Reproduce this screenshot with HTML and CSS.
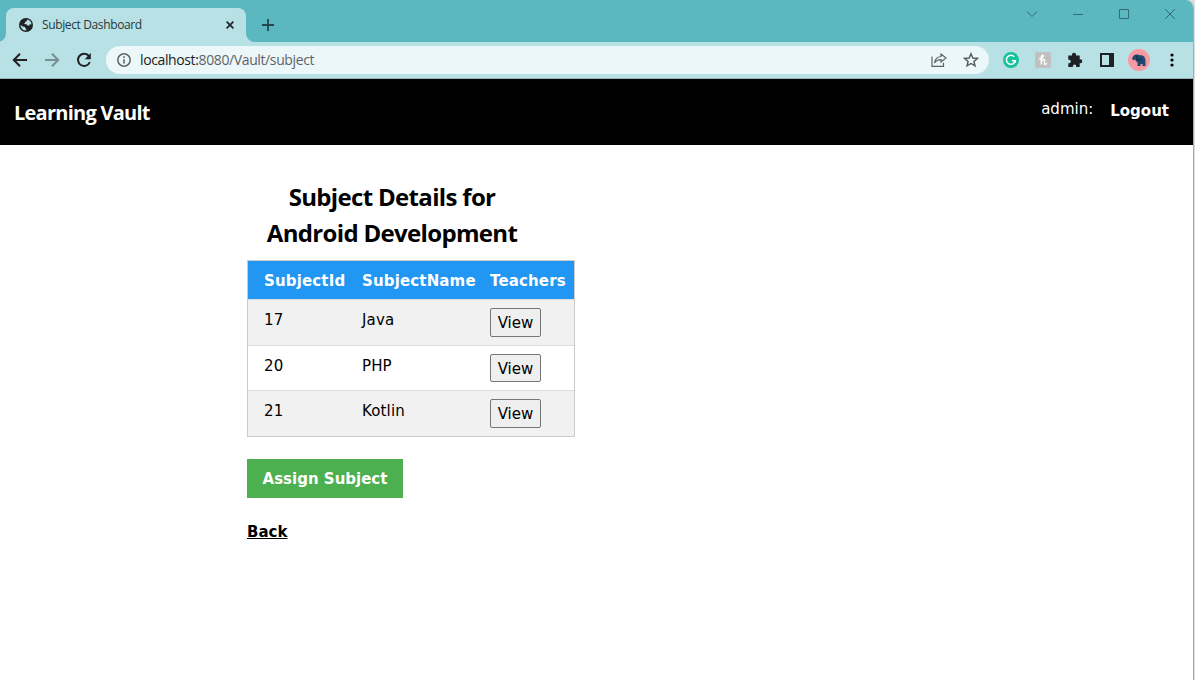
FILE: index.html
```html
<!DOCTYPE html>
<html lang="en">
<head>
<meta charset="utf-8">
<title>Subject Dashboard</title>
<link rel="stylesheet" href="styles.css">
</head>
<body>
<div class="window">
  <header class="tabstrip">
    <div class="tab">
      <svg class="globe" width="14" height="14" viewBox="0 0 14 14"><circle cx="7" cy="7" r="7" fill="#202124"/><path d="M7.800 1.500C8.400 2.600 7.500 3.600 6.300 3.800L5.800 5.200 4.600 6l2.900.3 1 1.200h2V6.300l2 .2A5.500 5.500 0 0 0 7.800 1.500ZM1.500 6.800l2.200 1.700 2.300.4.200 1.300 1 .6v1.700A5.500 5.500 0 0 1 1.500 6.800Z" fill="#b8e1e5"/></svg>
      <span class="tab-title">Subject Dashboard</span>
      <svg class="tab-close" width="8" height="8" viewBox="0 0 8 8"><path d="m.6.6 6.8 6.8M7.4.6.6 7.4" stroke="#202124" stroke-width="1.6"/></svg>
    </div>
    <svg class="new-tab" width="12" height="12" viewBox="0 0 12 12"><path d="M6 0v12M0 6h12" stroke="#26474b" stroke-width="1.8"/></svg>
    <div class="controls">
      <svg width="12" height="12" viewBox="0 0 12 12"><path d="m1 3.5 5 5 5-5"/></svg>
      <svg width="12" height="12" viewBox="0 0 12 12"><path d="M1 6.5h10"/></svg>
      <svg width="12" height="12" viewBox="0 0 12 12"><path d="M1.5 1.5h9v9h-9z"/></svg>
      <svg width="12" height="12" viewBox="0 0 12 12"><path d="m1 1 10 10M11 1 1 11"/></svg>
    </div>
  </header>
  <div class="toolbar">
    <svg class="nav-icon" width="16" height="16" viewBox="0 0 16 16"><path d="M15 8H2M8 1.700 1.800 8 8 14.300"/></svg>
    <svg class="nav-icon muted" width="16" height="16" viewBox="0 0 16 16"><path d="M1 8h13M8 1.700 14.200 8 8 14.300"/></svg>
    <svg class="nav-icon" width="16" height="16" viewBox="0 0 16 16"><path d="M13 4.200A6.100 6.100 0 1 0 13.800 10"/><path class="solid" d="M14.800 1v6.200H8.700z"/></svg>
    <div class="address">
      <svg width="14" height="14" viewBox="0 0 14 14"><circle cx="7" cy="7" r="6.200" fill="none" stroke="#5f6368" stroke-width="1.500"/><path d="M7 6.200v4.300M7 3.300v1.600" stroke="#5f6368" stroke-width="1.600"/></svg>
      <span class="url"><b>localhost:</b>8080/Vault/subject</span>
      <svg class="share" width="16" height="14" viewBox="0 0 16 14"><path d="M1 3.500v9.800h11.500V9.800M10 1l5 4-5 4V6.700C6.800 6.700 5 7.600 3.500 10 4 6.300 6.200 3.900 10 3.500Z" fill="none" stroke="#5f6368" stroke-width="1.200"/></svg>
      <svg class="star" width="16" height="16" viewBox="0 0 16 16"><path d="m8 1.800 1.800 4.200 4.600.400-3.500 3 1.100 4.500L8 11.500l-4 2.400 1.100-4.500-3.500-3 4.600-.400Z" fill="none" stroke="#55595d" stroke-width="1.400"/></svg>
    </div>
    <div class="extensions">
      <svg width="16" height="16" viewBox="0 0 16 16"><circle cx="8" cy="8" r="8" fill="#15c39a"/><path d="M11.200 4.800A4.500 4.500 0 1 0 12.300 8.700H9M12.300 8.700v2.300" fill="none" stroke="#fff" stroke-width="1.500"/></svg>
      <svg width="16" height="16" viewBox="0 0 16 16"><rect width="16" height="16" rx="2" fill="#c0c0c0"/><path d="M4.200 6.800C6.800 6.500 8.700 4.800 8.200 3.500 7.500 2.600 6.300 4 6.300 5v7.500M6.300 10C7.300 7 10 6.400 9.700 8.500c-.3 1.700-.8 4 .5 3.900.8 0 1.300-.7 1.600-1.400" fill="none" stroke="#fff" stroke-width="1.400"/></svg>
      <svg width="16" height="16" viewBox="0 0 16 16"><path d="M1.300 3.500H5V2.800a2 2 0 0 1 4 0v.7h3.700v3.700h.6a2 2 0 0 1 0 4h-.6V15H9.200v-.8a1.600 1.600 0 0 0-3.300 0v.8H1.300v-3.800h.8a1.700 1.700 0 0 0 0-3.400h-.8Z" fill="#202124"/></svg>
      <svg width="16" height="16" viewBox="0 0 16 16"><path d="M1 1h14v14H1ZM3 3v10h7V3Z" fill="#202124" fill-rule="evenodd"/></svg>
      <svg width="22" height="22" viewBox="0 0 22 22"><circle cx="11" cy="11" r="11" fill="#f99aa3"/><path d="M4 9.500C5 8 5.500 6 8 5.600c1.500-.5 3 0 4 .6 3-.3 5.500 1.500 5.500 5V17h-3v-2h-2v2H9.500v-4C8 13 7.500 12 7.300 10.500L5 11.300Z" fill="#21486f"/><path d="M9 7c-1 3 1 4.500 3 4l1-2" fill="none" stroke="#112c4b" stroke-width="1.200"/></svg>
      <svg class="dots" width="4" height="16" viewBox="0 0 4 16"><circle cx="2" cy="3" r="1.600"/><circle cx="2" cy="8" r="1.600"/><circle cx="2" cy="13" r="1.600"/></svg>
    </div>
  </div>
  <nav class="site-nav">
    <span class="brand">Learning Vault</span>
    <span class="user">admin:</span>
    <span class="logout">Logout</span>
  </nav>
  <main class="content">
    <h1 class="heading">Subject Details for<br>Android Development</h1>
    <table class="subjects">
      <thead><tr><th>SubjectId</th><th>SubjectName</th><th>Teachers</th></tr></thead>
      <tbody>
        <tr><td>17</td><td>Java</td><td><button class="view">View</button></td></tr>
        <tr><td>20</td><td>PHP</td><td><button class="view">View</button></td></tr>
        <tr><td>21</td><td>Kotlin</td><td><button class="view">View</button></td></tr>
      </tbody>
    </table>
    <button class="assign">Assign Subject</button>
    <a class="back">Back</a>
  </main>
</div>
</body>
</html>
```
FILE: styles.css
```css
* { box-sizing: border-box; }
body { margin: 0; width: 1195px; height: 680px; overflow: hidden; background: #dedede; font: 15px/22.5px Verdana, "DejaVu Sans", sans-serif; color: #000; }
svg { display: block; flex: none; }
.window { width: 1194px; height: 680px; background: #fff; border-right: 1px solid #aaa; border-top-right-radius: 8px; overflow: hidden; }
.tabstrip { height: 42px; background: #5bb8c1; display: flex; padding: 8px 0 0 6px; }
.tab { position: relative; width: 240px; height: 34px; border-radius: 8px 8px 0 0; background: #b8e1e5; display: flex; align-items: center; padding: 0 12px 0 13px; }
.tab::before, .tab::after { content: ""; position: absolute; bottom: 0; width: 8px; height: 8px; }
.tab::before { left: -8px; background: radial-gradient(circle at 0 0, transparent 7.5px, #b8e1e5 8px); }
.tab::after { right: -8px; background: radial-gradient(circle at 100% 0, transparent 7.5px, #b8e1e5 8px); }
.tab-title { margin-left: 9px; font: 12px/16px "Open Sans", sans-serif; letter-spacing: -0.37px; color: #26373b; white-space: nowrap; }
.tab-close { margin-left: auto; }
.new-tab { margin: 11px 0 0 16px; }
.controls { margin-left: auto; display: flex; gap: 34px; padding-right: 17px; }
.controls svg { fill: none; stroke: #356a70; stroke-width: 1; }
.toolbar { height: 37px; background: #b8e1e5; border-bottom: 1px solid #91b5b8; display: flex; align-items: center; padding-left: 12px; }
.nav-icon { margin-right: 16px; fill: none; stroke: #202124; stroke-width: 2; }
.nav-icon .solid { fill: #202124; stroke: none; }
.nav-icon.muted { stroke: #788f92; }
.address { width: 883px; height: 28px; margin-left: -2px; border-radius: 14px; background: #ebf7f8; display: flex; align-items: center; padding: 0 10px 0 11px; }
.url { margin-left: 9px; font: 14px/20px "Open Sans", sans-serif; letter-spacing: -0.38px; color: #5f6368; }
.url b { font-weight: 400; color: #202124; }
.share { margin-left: auto; }
.star { margin-left: 16px; }
.extensions { margin-left: 14px; display: flex; align-items: center; gap: 16px; }
.extensions svg:nth-child(5) { margin: 0 -3px; }
.extensions .dots { margin-left: 7px; }
.site-nav { height: 66px; background: #000; color: #fff; display: flex; align-items: flex-start; padding: 0 24px 0 14px; }
.brand { font: 700 20px/30px "Open Sans", sans-serif; margin-top: 19px; letter-spacing: -0.75px; }
.user { margin: 19px 17px 0 auto; }
.logout { margin-top: 21px; font-weight: 700; }
.content { width: 328px; margin-left: 247px; padding-top: 34px; }
.heading { width: 290px; margin: 0; height: 81px; font: 700 24px/36px "Open Sans", sans-serif; letter-spacing: -0.67px; text-align: center; white-space: nowrap; }
.subjects { width: 328px; border-collapse: separate; border-spacing: 0; border: 1px solid #ccc; border-bottom: 0; table-layout: fixed; }
.subjects th, .subjects td { text-align: left; vertical-align: top; padding: 9px 0 8px 8px; border-bottom: 1px solid #ddd; white-space: nowrap; letter-spacing: 0.15px; }
.subjects th { height: 39px; padding-bottom: 5px; }
.subjects td:last-child { padding-top: 8px; }
.subjects th:first-child, .subjects td:first-child { padding-left: 16px; width: 106px; }
.subjects th:nth-child(2) { width: 128px; }
.subjects thead tr { background: #2196f3; color: #fff; }
.subjects tbody tr:nth-child(odd) { background: #f1f1f1; }
.subjects tbody tr:last-child td { border-bottom-color: #ccc; }
.view { display: block; width: 51px; height: 29px; padding: 1px 0 0; font: inherit; color: #000; background: #efefef; border: 1px solid #767676; border-radius: 2px; }
.subjects tbody tr:nth-child(2) .view { height: 28px; padding-top: 2px; }
.assign { display: block; width: 156px; height: 39px; margin-top: 22px; padding: 2px 0 0; border: 0; background: #4caf50; color: #fff; font: 700 15px/23px Verdana, "DejaVu Sans", sans-serif; white-space: nowrap; }
.back { display: inline-block; margin-top: 23px; font-weight: 700; text-decoration: underline; }
```
